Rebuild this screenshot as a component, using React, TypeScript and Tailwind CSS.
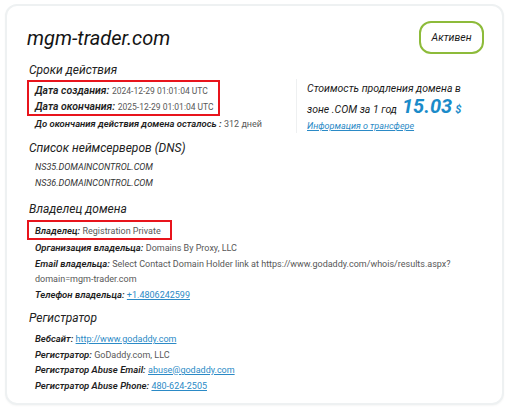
import type { ReactNode } from "react";

const ital = { fontFamily: "Roboto, 'Noto Sans', sans-serif" };

function Row({ label, children }: { label: string; children: ReactNode }) {
  return (
    <div className="text-[9.5px] leading-[15.5px]">
      <span className="font-semibold italic leading-none text-[#1e1e1e]">{label}</span>{" "}
      <span className="text-[9px] leading-none text-[#585858]">{children}</span>
    </div>
  );
}

function DateRow({ label, value }: { label: string; value: string }) {
  return (
    <div className="text-[10.5px] leading-[15.5px]">
      <span className="font-semibold italic leading-none text-[#1e1e1e]">{label}</span>{" "}
      <span className="text-[8.5px] leading-none text-[#585858]">{value}</span>
    </div>
  );
}

function Link({ children }: { children: ReactNode }) {
  return <span className="text-[#2b8ac6] underline decoration-[#2b8ac6]">{children}</span>;
}

function Heading({ children }: { children: ReactNode }) {
  return <h3 className="text-[12px] italic leading-[18px] text-[#222]">{children}</h3>;
}

export default function App() {
  return (
    <div className="h-[412px] w-[512px] bg-white pl-[5px] pt-[4px]" style={ital}>
      <div className="h-[401px] w-[499px] rounded-[12px] border-2 border-[#eef1f2] bg-white pl-[18px] pr-[18px] pt-[15px] shadow-[0_1px_2px_rgba(0,0,0,0.04)]">
        <div className="flex items-center justify-between">
          <h1 className="pl-[2px] text-[20px] italic leading-[26px] text-[#141414]">mgm-trader.com</h1>
          <div className="flex h-[33px] w-[65px] items-center justify-center rounded-[12px] border-2 border-[#8dbb3a] text-[10.5px] italic text-[#1a1a1a]">
            Активен
          </div>
        </div>

        <div className="mt-[7px] flex">
          <div className="w-[271px] pl-[4px]">
            <Heading>Сроки действия</Heading>
            <div className="mt-[1px] -ml-[2px] w-[193px] border-2 border-[#e8141c] pl-[6px] pt-[1px]">
              <DateRow label="Дата создания:" value="2024-12-29 01:01:04 UTC" />
              <DateRow label="Дата окончания:" value="2025-12-29 01:01:04 UTC" />
            </div>
            <div className="pl-[6px] text-[9.5px] leading-[16px]">
              <span className="font-semibold italic leading-none text-[#1e1e1e]">До окончания действия домена осталось :</span>{" "}
              <span className="text-[9px] leading-none text-[#585858]">312 дней</span>
            </div>
          </div>
          <div className="mt-[18px] h-[54px] w-px bg-[#eef0f1]" />
          <div className="pl-[10px] pt-[20px]">
            <div className="text-[10.5px] italic leading-[16px] text-[#1a1a1a]">Стоимость продления домена в</div>
            <div className="flex items-baseline text-[10.5px] italic leading-[18px] text-[#1a1a1a]">
              <span>зоне .COM за 1 год</span>
              <span className="ml-[5px] text-[20px] font-bold text-[#1a8bc9]">15.03</span>
              <span className="ml-[3px] text-[11px] font-bold text-[#1a8bc9]">$</span>
            </div>
            <div className="text-[9px] italic leading-[14px] text-[#2b8ac6] underline">
              Информация о трансфере
            </div>
          </div>
        </div>

        <div className="pl-[4px]">
          <div className="mt-[6px]">
            <Heading>Список неймсерверов (DNS)</Heading>
          </div>
          <div className="mt-[3px] pl-[6px] text-[9px] italic leading-[15.5px] text-[#333]">
            <div>NS35.DOMAINCONTROL.COM</div>
            <div>NS36.DOMAINCONTROL.COM</div>
          </div>

          <div className="mt-[9px]">
            <Heading>Владелец домена</Heading>
          </div>
          <div className="mt-[2px] -ml-[2px] w-[145px] border-2 border-[#e8141c] pl-[6px] pt-[1px]">
            <div className="text-[9.5px] leading-[15px]">
              <span className="font-semibold italic leading-none text-[#1e1e1e]">Владелец:</span>{" "}
              <span className="text-[9px] leading-none text-[#585858]">Registration Private</span>
            </div>
          </div>
          <div className="pl-[6px]">
            <Row label="Организация владельца:">Domains By Proxy, LLC</Row>
            <Row label="Email владельца:">
              <span className="whitespace-nowrap">
                Select Contact Domain Holder link at https://www.godaddy.com/whois/results.aspx?
              </span>
              <br />
              domain=mgm-trader.com
            </Row>
            <Row label="Телефон владельца:">
              <Link>+1.4806242599</Link>
            </Row>
          </div>

          <div className="mt-[7px]">
            <Heading>Регистратор</Heading>
          </div>
          <div className="mt-[4px] pl-[6px]">
            <Row label="Вебсайт:">
              <Link>http://www.godaddy.com</Link>
            </Row>
            <Row label="Регистратор:">GoDaddy.com, LLC</Row>
            <Row label="Регистратор Abuse Email:">
              <Link>abuse@godaddy.com</Link>
            </Row>
            <Row label="Регистратор Abuse Phone:">
              <Link>480-624-2505</Link>
            </Row>
          </div>
        </div>
      </div>
    </div>
  );
}
